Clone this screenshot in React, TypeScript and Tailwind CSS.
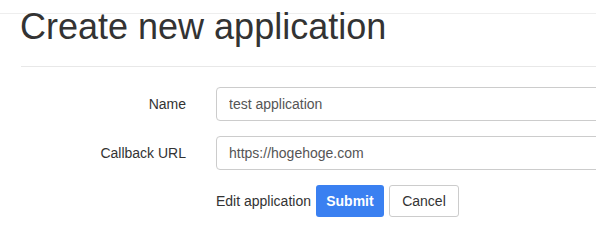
export default function App() {
  return (
    <div className="w-[596px] h-[242px] overflow-hidden bg-white font-['Liberation_Sans',Arial,sans-serif] text-[#333]">
      {/* top rule */}
      <div className="h-[14px] border-b border-[#eee] box-border" />

      <div className="pl-[20px]">
        <h1 className="text-[36px] leading-[26px] font-normal text-[#333]">
          Create new application
        </h1>
        <div className="mt-[26px] ml-[1px] h-px bg-[#e8e8e8]" />
      </div>

      <form className="mt-[20px] flex flex-col gap-[15px]">
        <div className="flex items-center">
          <label className="w-[186px] shrink-0 text-right text-[14px]">Name</label>
          <input
            readOnly
            value="test application"
            className="ml-[30px] w-[420px] h-[34px] shrink-0 rounded-[4px] border border-[#ccc] px-[12px] text-[14px] text-[#555] outline-none"
          />
        </div>
        <div className="flex items-center">
          <label className="w-[186px] shrink-0 text-right text-[14px]">Callback URL</label>
          <input
            readOnly
            value="https://hogehoge.com"
            className="ml-[30px] w-[420px] h-[34px] shrink-0 rounded-[4px] border border-[#ccc] px-[12px] text-[14px] text-[#555] outline-none"
          />
        </div>
        <div className="flex items-center pl-[216px] gap-[5px]">
          <span className="text-[14px] text-[#333]">Edit application</span>
          <button
            type="button"
            className="w-[68px] h-[32px] rounded-[3px] bg-[#3a80f1] text-white text-[14px] font-bold flex items-center justify-center"
          >
            Submit
          </button>
          <button
            type="button"
            className="w-[70px] h-[32px] rounded-[3px] border border-[#ccc] bg-white text-[#333] text-[14px] flex items-center justify-center"
          >
            Cancel
          </button>
        </div>
      </form>
    </div>
  );
}
